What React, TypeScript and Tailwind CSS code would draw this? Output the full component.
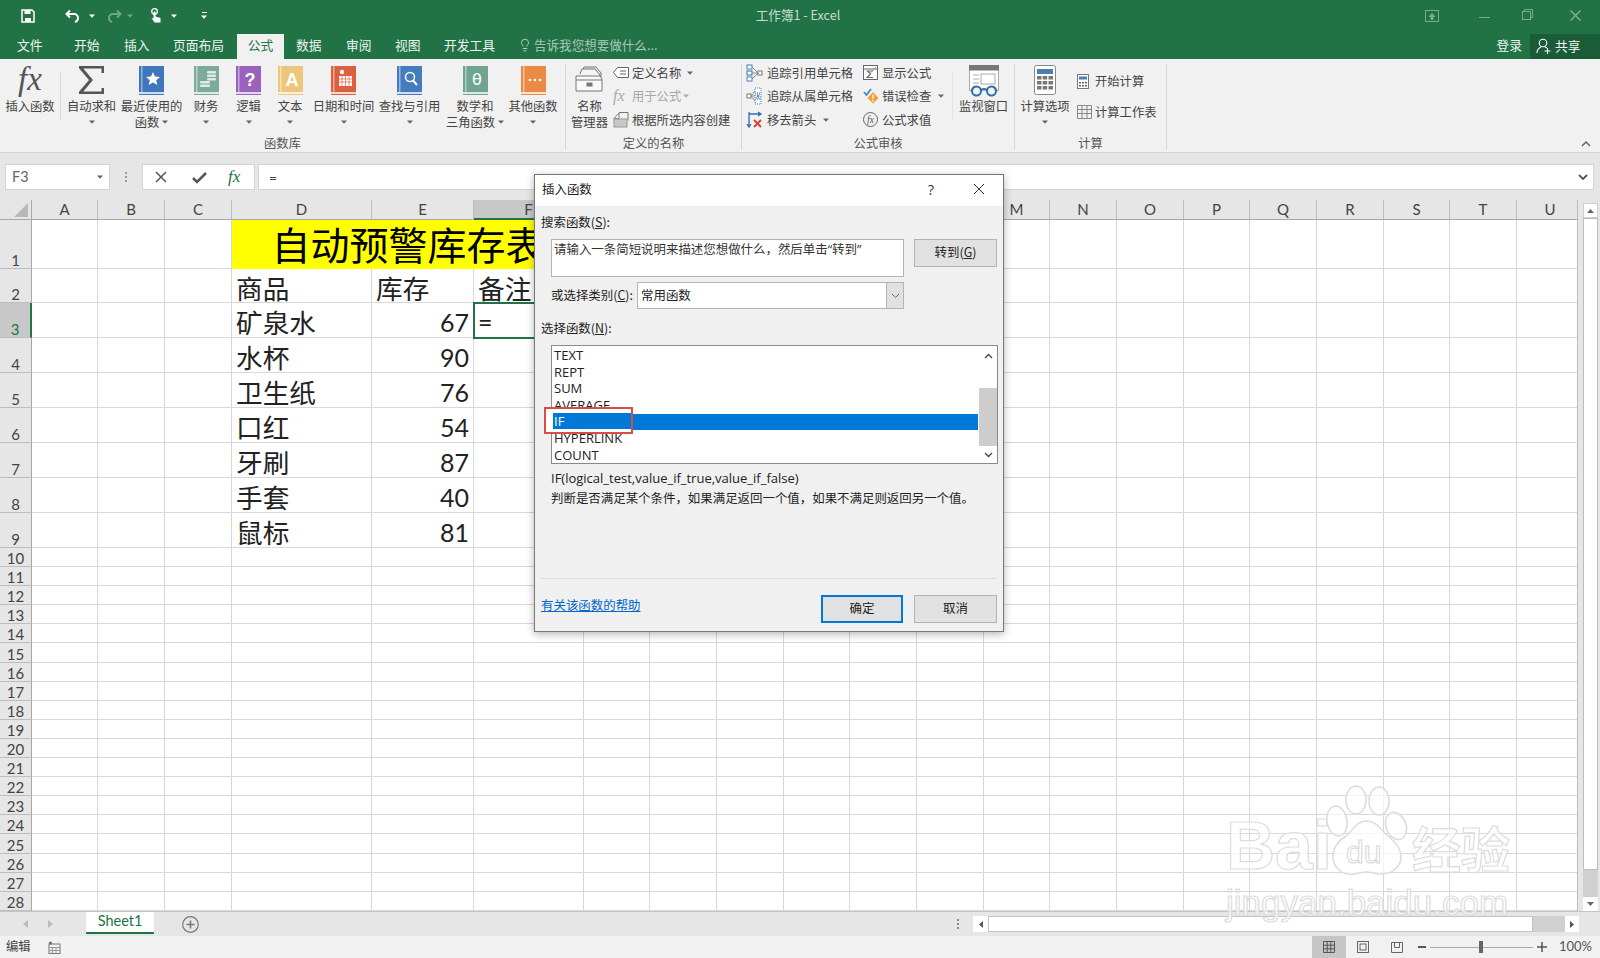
import React from "react";
import { Lightbulb } from "lucide-react";

const CJK = "font-['Noto_Sans_CJK_SC','Noto_Sans',sans-serif]";
const LAT = "font-['Lato','Noto_Sans_CJK_SC',sans-serif]";
const UI = "font-['Open_Sans','Noto_Sans_CJK_SC',sans-serif]";

const Caret = ({ c = "#666" }: { c?: string }) => (
  <svg width="6" height="4" viewBox="0 0 6 4" className="shrink-0"><path d="M0 0.5h6L3 3.7z" fill={c} /></svg>
);

const Book = ({ color, spine, children }: { color: string; spine?: string; children?: React.ReactNode }) => (
  <svg width="25" height="30" viewBox="0 0 25 30">
    <rect x="0" y="0" width="25" height="26.5" fill={color} />
    <rect x="2.4" y="0" width="0.9" height="26.5" fill="#fff" opacity="0.75" />
    <rect x="0" y="26.5" width="25" height="1.3" fill="#fff" />
    <rect x="0" y="27.8" width="25" height="1.2" fill={spine ?? color} />
    {children}
  </svg>
);

const BigBtn = ({ w, lines, icon, caret = true, sub }: { w: string; lines: string[]; icon: React.ReactNode; caret?: boolean; sub?: boolean }) => (
  <div className={`${w} flex flex-col items-center shrink-0`}>
    <div className="h-[40px] w-full flex items-start justify-center pt-[7px]">{icon}</div>
    {lines.map((l, i) => (
      <div key={i} className="h-[15.5px] leading-[15.5px] whitespace-nowrap flex items-center gap-[3px]">
        {l}
        {sub && i === lines.length - 1 && <Caret />}
      </div>
    ))}
    {caret && !sub && <div className="h-[15.5px] flex items-center justify-center"><Caret /></div>}
  </div>
);

const Sep = ({ cls = "" }: { cls?: string }) => <div className={`w-px shrink-0 bg-[#d6d6d6] ${cls}`} />;

const GroupLabel = ({ t }: { t: string }) => (
  <div className="h-[15px] leading-[15px] text-center text-[#555] whitespace-nowrap">{t}</div>
);

const SmallRow = ({ icon, text, h, gray, caret, iw }: { icon: React.ReactNode; text: string; h: string; gray?: boolean; caret?: string; iw: string }) => (
  <div className={`${h} flex items-center whitespace-nowrap ${gray ? "text-[#a8a8a8]" : ""}`}>
    <div className={`${iw} shrink-0 flex items-center`}>{icon}</div>
    <span>{text}</span>
    {caret && <span className={`${caret} flex`}><Caret c={gray ? "#aaa" : "#666"} /></span>}
  </div>
);

const TraceIcon = ({ flip }: { flip?: boolean }) => (
  <svg width="17" height="18" viewBox="0 0 17 18" fill="none" stroke="#4a7fb8" strokeWidth="1">
    {flip ? (
      <>
        <rect x="1" y="7" width="4" height="4" fill="#fff" stroke="#777" />
        <path d="M5 9l4-5M5 9h4M5 9l4 5" stroke="#888" />
        <rect x="9" y="1" width="6" height="5" fill="#fff" strokeDasharray="1 1" stroke="#4a7fb8" />
        <rect x="9" y="7" width="6" height="4" fill="#fff" strokeDasharray="1 1" />
        <rect x="9" y="12" width="6" height="5" fill="#fff" strokeDasharray="1 1" />
        <path d="M12 7.5v3M10.5 9h3" stroke="#2f6fb0" />
      </>
    ) : (
      <>
        <rect x="1" y="1" width="5" height="4" fill="#fff" stroke="#4a7fb8" />
        <rect x="1" y="7" width="5" height="4" fill="#fff" stroke="#2f6fb0" />
        <rect x="1" y="13" width="5" height="4" fill="#fff" stroke="#4a7fb8" />
        <path d="M6 3l6 6M6 9h6M6 15l6-6" stroke="#888" />
        <rect x="12" y="7" width="4" height="4" fill="#fff" stroke="#777" />
      </>
    )}
  </svg>
);

const cols = ["A", "B", "C", "D", "E", "F", "G", "H", "I", "J", "K", "L", "M", "N", "O", "P", "Q", "R", "S", "T", "U"];
const names: Record<number, [string, string]> = {
  3: ["矿泉水", "67"], 4: ["水杯", "90"], 5: ["卫生纸", "76"], 6: ["口红", "54"], 7: ["牙刷", "87"], 8: ["手套", "40"], 9: ["鼠标", "81"],
};
const rows = Array.from({ length: 28 }, (_, i) => i + 1);
const cellB = "bg-white border-r border-b border-[#d8d8d8]";

function Sheet() {
  return (
    <div className="w-[1578px] h-full overflow-hidden border-r border-[#bdbdbd] grid grid-cols-[32px_66px_67px_67px_140px_102px_110px_66px_67px_67px_66px_67px_67px_66px_67px_67px_66px_67px_67px_66px_67px_67px] grid-rows-[20px_49px_34px_35px_35px_35px_35px_35px_35px_35px_repeat(19,19.105px)]">
      <div className="bg-[#e6e6e6] border-b border-r border-[#a8a8a8] flex items-end justify-end p-[2px] pr-[3px]">
        <svg width="14" height="14" viewBox="0 0 14 14"><path d="M14 0v14H0z" fill="#b8b8b8" /></svg>
      </div>
      {cols.map((c) => (
        <div key={c} className={`${LAT} text-[15px] text-[#444] flex items-center justify-center border-r border-[#bdbdbd] ${c === "F" ? "bg-[#c8c8c8] border-b-2 border-b-[#217346]" : "bg-[#e6e6e6] border-b border-b-[#a8a8a8]"}`}>{c}</div>
      ))}
      {rows.map((r) => (
        <React.Fragment key={r}>
          <div className={`${LAT} text-[15px] leading-[16px] flex items-end justify-center border-b border-[#bdbdbd] ${r === 3 ? "bg-[#c8c8c8] border-r-2 border-r-[#217346] text-[#217346]" : "bg-[#e6e6e6] border-r border-r-[#a8a8a8] text-[#444]"}`}>{r}</div>
          {cols.map((c) => {
            if (r === 1 && (c === "E" || c === "F")) return null;
            if (r === 1 && c === "D")
              return <div key={c} className={`col-span-3 bg-[#ffff00] flex items-center justify-center pb-[4px] text-[39px] leading-[44px] text-black ${CJK}`}>自动预警库存表</div>;
            let content: React.ReactNode = null;
            let extra = "";
            if (r === 2 && c === "D") content = "商品";
            if (r === 2 && c === "E") content = "库存";
            if (r === 2 && c === "F") content = "备注";
            if (names[r] && c === "D") content = names[r][0];
            if (names[r] && c === "E") {
              content = <span className={`${LAT} text-[25px] w-full text-right pr-[4px] leading-[30px]`}>{names[r][1]}</span>;
            }
            if (r === 3 && c === "F") {
              content = <span className={`${LAT} text-[25px] leading-[30px]`}>=</span>;
              extra = "outline-2 outline-[#217346] -outline-offset-1 z-10";
            }
            return (
              <div key={c} className={`${cellB} ${extra} ${content ? `flex items-center pl-[4px] pt-[4px] text-[26.67px] leading-[30px] text-[#222] overflow-visible whitespace-nowrap ${CJK}` : ""}`}>{content}</div>
            );
          })}
        </React.Fragment>
      ))}
    </div>
  );
}

const ListItem = ({ t }: { t: string }) => (
  <div className="h-[16.67px] leading-[16.67px] pl-[2px] text-[#222]">{t}</div>
);

function Dialog() {
  return (
    <div className={`absolute left-[534px] top-[174px] w-[470px] h-[458px] bg-[#f0f0f0] border border-[#777] shadow-[0_2px_8px_rgba(0,0,0,0.3)] flex flex-col z-20 text-[12.45px] text-[#222] ${CJK}`}>
      <div className="h-[31px] bg-white flex items-center pl-[7px] pb-[3px] shrink-0">
        <span className="flex-1">插入函数</span>
        <span className={`${UI} w-[14px] mr-[35px] text-center text-[14px] text-[#333]`}>?</span>
        <svg width="12" height="12" viewBox="0 0 12 12" className="mr-[18px]"><path d="M1 1l10 10M11 1L1 11" stroke="#333" strokeWidth="1" /></svg>
      </div>
      <div className="ml-[6px] mt-[8px] h-[16px] leading-[16px]">搜索函数(<u>S</u>):</div>
      <div className="ml-[16px] mt-[9px] flex items-start">
        <div className="w-[353px] h-[38px] bg-white border border-[#b4b4b4] pl-[2px] pt-0 leading-[18px] text-[#333] whitespace-nowrap">请输入一条简短说明来描述您想做什么，然后单击<span className={UI}>“</span>转到<span className={UI}>”</span></div>
        <div className="ml-[10px] w-[83px] h-[28px] bg-[#e1e1e1] border border-[#b4b4b4] flex items-center justify-center pb-[1px]">转到(<u>G</u>)</div>
      </div>
      <div className="ml-[16px] mt-[5px] flex items-center">
        <span className="w-[86px] whitespace-nowrap pb-[1px]">或选择类别(<u>C</u>):</span>
        <div className="w-[267px] h-[27px] bg-white border border-[#b4b4b4] flex items-center pl-[3px]">
          <span className="flex-1 pb-[1px]">常用函数</span>
          <div className="w-[17px] h-full bg-[#e1e1e1] border-l border-[#b4b4b4] flex items-center justify-center">
            <svg width="9" height="6" viewBox="0 0 9 6" fill="none"><path d="M1 1l3.5 3.5L8 1" stroke="#666" /></svg>
          </div>
        </div>
      </div>
      <div className="ml-[6px] mt-[11px] h-[16px] leading-[16px]">选择函数(<u>N</u>):</div>
      <div className="relative ml-[16px] mt-[9px] w-[447px] h-[119px] bg-white border border-[#8a8a8a] flex">
        <div className={`w-[427px] pt-[1px] text-[13px] ${UI} overflow-hidden`}>
          <ListItem t="TEXT" />
          <ListItem t="REPT" />
          <ListItem t="SUM" />
          <ListItem t="AVERAGE" />
          <div className="h-[16.67px] bg-[#0078d7]" />
          <ListItem t="HYPERLINK" />
          <ListItem t="COUNT" />
        </div>
        <div className="w-[18px] ml-[1px] flex flex-col items-center">
          <div className="h-[17px] flex items-center justify-center mt-[1px]">
            <svg width="9" height="6" viewBox="0 0 9 6" fill="none"><path d="M1 5l3.5-3.5L8 5" stroke="#444" strokeWidth="1.3" /></svg>
          </div>
          <div className="mt-[24px] w-full h-[58px] bg-[#cdcdcd]" />
          <div className="h-[17px] flex items-center justify-center">
            <svg width="9" height="6" viewBox="0 0 9 6" fill="none"><path d="M1 1l3.5 3.5L8 1" stroke="#444" strokeWidth="1.3" /></svg>
          </div>
        </div>
        <div className={`absolute left-[-8px] top-[61px] w-[89px] h-[27px] bg-white border-2 border-[#dc4a4a] pt-[4px] pl-[7px] text-[13px] ${UI}`}>
          <div className="h-[16px] leading-[16px] bg-[#0078d7] text-white pl-[1px]">IF</div>
        </div>
      </div>
      <div className={`ml-[16px] mt-[5px] h-[18px] leading-[18px] text-[13px] ${UI}`}>IF(logical_test,value_if_true,value_if_false)</div>
      <div className="ml-[16px] mt-[3px] h-[16px] leading-[16px] whitespace-nowrap">判断是否满足某个条件，如果满足返回一个值，如果不满足则返回另一个值。</div>
      <div className="mx-[6px] mt-[72px] h-px bg-[#dcdcdc]" />
      <div className="ml-[6px] mt-[16px] flex items-start">
        <a className="mt-[2px] h-[16px] leading-[16px] w-[280px] text-[#0066cc] underline">有关该函数的帮助</a>
        <div className="w-[82px] h-[28px] bg-[#e1e1e1] border-2 border-[#0078d7] flex items-center justify-center pb-[1px]">确定</div>
        <div className="ml-[11px] w-[83px] h-[28px] bg-[#e1e1e1] border border-[#b4b4b4] flex items-center justify-center pb-[1px]">取消</div>
      </div>
    </div>
  );
}

const tabs: [string, string][] = [
  ["文件", "ml-[17px] w-[57px]"],
  ["开始", "w-[50px]"],
  ["插入", "w-[49px]"],
  ["页面布局", "w-[64px]"],
];
const tabsAfter: [string, string][] = [
  ["数据", "ml-[12px] w-[50px]"],
  ["审阅", "w-[49px]"],
  ["视图", "w-[49px]"],
  ["开发工具", "w-[74px]"],
];

function Watermark() {
  const outline = "text-white/70 [-webkit-text-stroke:1.2px_#dcdcdc]";
  return (
    <div className="absolute left-[1226px] top-[785px] w-[292px] h-[140px] z-10 pointer-events-none">
      <span className={`absolute left-0 top-[20px] text-[68px] leading-[80px] font-bold font-['Liberation_Sans',sans-serif] ${outline}`}>Bai</span>
      <svg width="86" height="94" viewBox="0 0 86 94" className="absolute left-[98px] top-0" fill="#ffffffb0" stroke="#dcdcdc" strokeWidth="1.5">
        <ellipse cx="13" cy="36" rx="10" ry="15" transform="rotate(-10 13 36)" />
        <ellipse cx="32" cy="15" rx="10" ry="14" />
        <ellipse cx="55" cy="16" rx="10" ry="14" />
        <ellipse cx="72" cy="41" rx="10" ry="14" transform="rotate(-20 72 41)" />
        <path d="M42 36c-10 0-13 10-20 15C14 56 9 63 9 72c0 12 11 19 22 17 5-1 8-2 12-2s8 2 14 2c11 0 20-7 20-17 0-9-6-15-13-21-7-5-10-15-22-15z" />
      </svg>
      <span className="absolute left-[120px] top-[47px] text-[32px] leading-[40px] font-['Liberation_Sans',sans-serif] text-white/70 [-webkit-text-stroke:1px_#d8d8d8]">du</span>
      <span className={`absolute left-[186px] top-[32px] text-[49px] leading-[60px] font-bold whitespace-nowrap ${CJK} ${outline}`}>经验</span>
      <span className={`absolute left-0 top-[97px] text-[35px] leading-[42px] whitespace-nowrap font-['Liberation_Sans',sans-serif] ${outline}`}>jingyan.baidu.com</span>
    </div>
  );
}

export default function App() {
  return (
    <div className={`relative w-[1600px] h-[958px] overflow-hidden flex flex-col bg-white text-[12.3px] text-[#444] ${CJK}`}>
      {/* Title bar */}
      <div className="h-[34px] bg-[#217346] grid grid-cols-[1fr_auto_1fr] items-center pb-[3px] shrink-0">
        <div className="flex items-center pl-[21px]">
          <svg width="14" height="14" viewBox="0 0 14 14" fill="none">
            <path d="M1 1h10l2 2v10H1z" stroke="#fff" strokeWidth="1.5" />
            <rect x="3.5" y="1" width="6" height="4" fill="#fff" />
            <rect x="4" y="9" width="6" height="4" fill="#fff" />
          </svg>
          <svg width="16" height="14" viewBox="0 0 16 14" fill="none" className="ml-[30px]">
            <path d="M5 1.5L1.5 5 5 8.5" stroke="#fff" strokeWidth="2" />
            <path d="M2 5h7a4 4 0 0 1 4 4c0 2-1.500 3.500-3 4" stroke="#fff" strokeWidth="2" />
          </svg>
          <span className="ml-[8px] flex"><Caret c="#fff" /></span>
          <svg width="16" height="14" viewBox="0 0 16 14" fill="none" className="ml-[11px] opacity-35 -scale-x-100">
            <path d="M5 1.5L1.500 5 5 8.500" stroke="#fff" strokeWidth="2" />
            <path d="M2 5h7a4 4 0 0 1 4 4c0 2-1.500 3.500-3 4" stroke="#fff" strokeWidth="2" />
          </svg>
          <span className="ml-[5px] flex opacity-35"><Caret c="#fff" /></span>
          <svg width="12" height="16" viewBox="0 0 12 16" className="ml-[17px]" fill="#fff">
            <circle cx="4.500" cy="3.500" r="2.800" fill="none" stroke="#fff" strokeWidth="1.300" />
            <path d="M3.500 3.500h2v5l5 1.500v4.500H4.500L1.500 10l2 .5z" />
          </svg>
          <span className="ml-[9px] flex"><Caret c="#fff" /></span>
          <div className="ml-[24px] flex flex-col items-center gap-[2px]">
            <div className="w-[5px] h-px bg-white" />
            <Caret c="#fff" />
          </div>
        </div>
        <div className="text-[#c8dcd0] text-[12.6px] -translate-x-[2px] whitespace-nowrap">工作簿1 - Excel</div>
        <div className="flex items-center justify-end">
          <svg width="14" height="12" viewBox="0 0 14 12" className="opacity-40" fill="none"><rect x="0.500" y="0.500" width="13" height="11" stroke="#fff" /><path d="M7 3L3.500 7h2v3h3V7h2z" fill="#fff" /></svg>
          <div className="w-[11px] h-px bg-white opacity-40 ml-[40px] mt-[3px]" />
          <svg width="11" height="11" viewBox="0 0 11 11" className="opacity-40 ml-[32px] mb-[2px]" fill="none" stroke="#fff"><rect x="0.500" y="2.500" width="8" height="8" /><path d="M2.500 2.500v-2h8v8h-2" /></svg>
          <svg width="11" height="11" viewBox="0 0 11 11" className="opacity-45 ml-[37px] mr-[19px]" fill="none" stroke="#fff" strokeWidth="1.300"><path d="M.5.5l10 10M10.500.5l-10 10" /></svg>
        </div>
      </div>
      {/* Tabs */}
      <div className="h-[25px] bg-[#217346] flex items-stretch text-[12.75px] text-[#eef5f0] shrink-0">
        {tabs.map(([t, c]) => (
          <div key={t} className={`${c} flex items-center pb-[3px] whitespace-nowrap`}>{t}</div>
        ))}
        <div className="w-[47px] bg-[#f1f1f1] text-[#217346] flex items-center justify-center pb-[3px]">公式</div>
        {tabsAfter.map(([t, c]) => (
          <div key={t} className={`${c} flex items-center pb-[3px] whitespace-nowrap`}>{t}</div>
        ))}
        <div className="flex items-center pb-[3px] text-[#a9c8b6] text-[12.55px] whitespace-nowrap flex-1">
          <Lightbulb size={14} strokeWidth={1.4} className="text-[#cfe0d6] mr-[2px]" />
          告诉我您想要做什么...
        </div>
        <div className="flex items-center pb-[3px] mr-[8px] whitespace-nowrap">登录</div>
        <div className="w-[70px] bg-[#1a5c38] flex items-center pb-[2px] pl-[6px] gap-[3px] whitespace-nowrap">
          <svg width="16" height="16" viewBox="0 0 16 16" fill="none" stroke="#fff" strokeWidth="1.100">
            <circle cx="7" cy="5" r="3.800" />
            <path d="M1 15c0-3.500 2-5 4-6M9 9c.6.300 1.200.700 1.700 1.200M8.500 13h6M11.500 10v6" />
          </svg>
          共享
        </div>
      </div>
      {/* Ribbon */}
      <div className="h-[94px] bg-[#f1f1f1] border-b border-[#d2d2d2] flex shrink-0 relative">
        <div className="w-[565px] flex flex-col shrink-0">
          <div className="h-[77px] flex">
            <BigBtn w="w-[60px]" lines={["插入函数"]} caret={false} icon={<span className="text-[33px] leading-[26px] italic text-[#555] font-['Liberation_Serif',serif]">fx</span>} />
            <Sep cls="h-[48px] mt-[13px]" />
            <BigBtn w="w-[61px]" lines={["自动求和"]} icon={
              <svg width="25" height="28" viewBox="0 0 25 28"><path d="M24 7V1H1l11 13L1 27h23v-5" fill="none" stroke="#555" strokeWidth="3" /></svg>
            } />
            <BigBtn w="w-[59px]" lines={["最近使用的", "函数"]} sub icon={
              <Book color="#3f76bc" spine="#3f76bc"><path d="M14 6l2 4.600 5 .4-3.800 3.200 1.200 4.800-4.400-2.600-4.400 2.600 1.200-4.800L7 11l5-.4z" fill="#fff" /></Book>
            } />
            <BigBtn w="w-[50px]" lines={["财务"]} icon={
              <Book color="#7dab99"><g fill="#dfe9e4"><rect x="6" y="15" width="10" height="2.500" rx="1" /><rect x="6" y="18.500" width="10" height="2.500" rx="1" /><rect x="13" y="5" width="9" height="2.500" rx="1" /><rect x="13" y="8.500" width="9" height="2.500" rx="1" /><rect x="13" y="12" width="9" height="2.500" rx="1" /></g></Book>
            } />
            <BigBtn w="w-[35px]" lines={["逻辑"]} icon={
              <Book color="#9b62bd"><text x="14" y="20" textAnchor="middle" fontSize="18" fontWeight="700" fill="#fff" fontFamily="Liberation Sans">?</text></Book>
            } />
            <BigBtn w="w-[48px]" lines={["文本"]} icon={
              <Book color="#eec57c"><text x="14" y="20" textAnchor="middle" fontSize="18" fontWeight="700" fill="#fff" fontFamily="Liberation Sans">A</text></Book>
            } />
            <BigBtn w="w-[59px]" lines={["日期和时间"]} icon={
              <Book color="#dc5f3f">
                <circle cx="11" cy="6" r="2.200" fill="#fff" />
                <rect x="8" y="10" width="13" height="10" fill="#fff" />
                <path d="M8 13h13M8 16h13M11 10v10M14.500 10v10M18 10v10" stroke="#dc5f3f" strokeWidth=".7" />
              </Book>
            } />
            <BigBtn w="w-[73px]" lines={["查找与引用"]} icon={
              <Book color="#457cbd"><circle cx="13" cy="11" r="4.500" fill="none" stroke="#fff" strokeWidth="1.500" /><path d="M16 14.500l4 4.500" stroke="#fff" strokeWidth="2" /></Book>
            } />
            <BigBtn w="w-[58px]" lines={["数学和", "三角函数"]} sub icon={
              <Book color="#6fa591"><text x="14" y="19" textAnchor="middle" fontSize="16" fill="#fff" fontFamily="DejaVu Sans">θ</text></Book>
            } />
            <BigBtn w="w-[58px]" lines={["其他函数"]} icon={
              <Book color="#e98b44"><circle cx="9" cy="14" r="1.300" fill="#fff" /><circle cx="14" cy="14" r="1.300" fill="#fff" /><circle cx="19" cy="14" r="1.300" fill="#fff" /></Book>
            } />
          </div>
          <GroupLabel t="函数库" />
        </div>
        <Sep cls="h-[86px] mt-[5px]" />
        <div className="w-[175px] flex flex-col shrink-0">
          <div className="h-[77px] flex">
            <BigBtn w="w-[47px]" lines={["名称", "管理器"]} caret={false} icon={
              <svg width="29" height="26" viewBox="0 0 29 26" fill="none" stroke="#777">
                <path d="M7 6l2-5h12l5 6v4" fill="#e8e8e8" />
                <path d="M5 8l2-5h13l5 6v3" fill="#f4f4f4" />
                <path d="M1 10h24l2 3v12H1z" fill="#f8f8f8" />
                <path d="M1 14h26" />
                <rect x="12" y="17" width="5" height="3" fill="#777" />
              </svg>
            } />
            <div className="pt-[2px]">
              <SmallRow h="h-[23.500px]" iw="w-[19px]" caret="ml-[6px]" text="定义名称" icon={
                <svg width="16" height="11" viewBox="0 0 16 11" fill="none" stroke="#666"><path d="M4.500.5h11v10h-11L.5 5.500z" fill="#fff" /><path d="M7 4h6M7 7h6" /></svg>
              } />
              <SmallRow h="h-[23.500px]" iw="w-[19px]" gray caret="ml-[2px]" text="用于公式" icon={
                <span className="text-[16px] italic text-[#aaa] font-['Liberation_Serif',serif]">fx</span>
              } />
              <SmallRow h="h-[23.500px]" iw="w-[19px]" text="根据所选内容创建" icon={
                <svg width="16" height="16" viewBox="0 0 16 16" fill="none" stroke="#777"><path d="M6 .5h9v8" /><path d="M1 6.500L6 1v5.500z" fill="#fff" /><rect x="1" y="7" width="13" height="8" fill="#c8c8c8" stroke="#999" /></svg>
              } />
            </div>
          </div>
          <GroupLabel t="定义的名称" />
        </div>
        <Sep cls="h-[86px] mt-[5px]" />
        <div className="w-[272px] flex flex-col shrink-0">
          <div className="h-[77px] flex">
            <div className="pt-[2px] pl-[4px] w-[121px]">
              <SmallRow h="h-[23.500px]" iw="w-[21px]" text="追踪引用单元格" icon={<TraceIcon />} />
              <SmallRow h="h-[23.500px]" iw="w-[21px]" text="追踪从属单元格" icon={<TraceIcon flip />} />
              <SmallRow h="h-[23.500px]" iw="w-[21px]" caret="ml-[7px]" text="移去箭头" icon={
                <svg width="17" height="18" viewBox="0 0 17 18" fill="none"><path d="M3 1v14M1 13l2 3 2-3M3 3h11M12 1l3 2-3 2" stroke="#2f6fb0" strokeWidth="1.300" /><path d="M8 9l7 7M15 9l-7 7" stroke="#d9472f" strokeWidth="2" /></svg>
              } />
            </div>
            <div className="pt-[2px] w-[89px]">
              <SmallRow h="h-[23.500px]" iw="w-[19px]" text="显示公式" icon={
                <svg width="15" height="15" viewBox="0 0 15 15" fill="none" stroke="#666"><rect x=".5" y=".5" width="14" height="14" fill="#fff" /><path d="M.5 4h14" /><path d="M10 6H4.500l3 3-3 3.500H10" strokeWidth="1.100" /><path d="M3 13L13 2" stroke="#999" /></svg>
              } />
              <SmallRow h="h-[23.500px]" iw="w-[19px]" caret="ml-[7px]" text="错误检查" icon={
                <svg width="16" height="16" viewBox="0 0 16 16"><path d="M1 4l2.500 3L8 1" fill="none" stroke="#3f8ed0" strokeWidth="1.800" /><path d="M10 4l5.500 6-5.500 5.500L4.500 10z" fill="#f0a030" /><path d="M10 6.500v4.500M10 12v1.500" stroke="#fff" strokeWidth="1.300" /></svg>
              } />
              <SmallRow h="h-[23.500px]" iw="w-[19px]" text="公式求值" icon={
                <svg width="15" height="15" viewBox="0 0 15 15" fill="none"><circle cx="7.500" cy="7.500" r="7" stroke="#666" /><text x="7.500" y="11" textAnchor="middle" fontSize="9.500" fontStyle="italic" fill="#555" fontFamily="Liberation Serif">fx</text></svg>
              } />
            </div>
            <Sep cls="h-[48px] mt-[13px] bg-[#e2e2e2]" />
            <BigBtn w="w-[61px]" lines={["监视窗口"]} caret={false} icon={
              <svg width="30" height="32" viewBox="0 0 30 32" fill="none" className="-mt-[1px]">
                <rect x=".5" y=".5" width="29" height="25" fill="#fff" stroke="#aaa" />
                <rect x="0" y="0" width="30" height="5.500" fill="#777" />
                <path d="M4 10h6M4 14h6M4 18h6" stroke="#aaa" />
                <rect x="12" y="9" width="14" height="10" stroke="#aaa" />
                <circle cx="7.500" cy="26" r="4.500" fill="#f1f1f1" stroke="#2f6fa8" strokeWidth="2" />
                <circle cx="22.500" cy="26" r="4.500" fill="#f1f1f1" stroke="#2f6fa8" strokeWidth="2" />
                <path d="M12 25c2-1.500 4-1.500 6 0M3 25l3-4M27 25l-3-4" stroke="#2f6fa8" strokeWidth="1.500" />
              </svg>
            } />
          </div>
          <GroupLabel t="公式审核" />
        </div>
        <Sep cls="h-[86px] mt-[5px]" />
        <div className="w-[151px] flex flex-col shrink-0">
          <div className="h-[77px] flex">
            <BigBtn w="w-[60px]" lines={["计算选项"]} icon={
              <svg width="22" height="30" viewBox="0 0 22 30" className="-mt-[1px]">
                <rect x=".5" y=".5" width="21" height="29" rx="2" fill="#fff" stroke="#888" />
                <rect x="3" y="4" width="16" height="5" fill="#4a7fb0" />
                <g fill="#777">
                  <rect x="3" y="11" width="4.500" height="3.500" /><rect x="8.700" y="11" width="4.500" height="3.500" /><rect x="14.500" y="11" width="4.500" height="3.500" />
                  <rect x="3" y="16" width="4.500" height="3.500" /><rect x="8.700" y="16" width="4.500" height="3.500" /><rect x="14.500" y="16" width="4.500" height="3.500" />
                  <rect x="3" y="21" width="4.500" height="3.500" /><rect x="8.700" y="21" width="4.500" height="3.500" /><rect x="14.500" y="21" width="4.500" height="3.500" />
                </g>
              </svg>
            } />
            <div className="pt-[7px] pl-[2px]">
              <SmallRow h="h-[30.700px]" iw="w-[18px]" text="开始计算" icon={
                <svg width="12" height="15" viewBox="0 0 12 15"><rect x=".5" y=".5" width="11" height="14" fill="#fff" stroke="#777" /><rect x="2" y="2.500" width="8" height="3" fill="#4a7fb0" /><path d="M2 8h2v1.500H2zM5 8h2v1.500H5zM8 8h2v1.500H8zM2 11h2v1.500H2zM5 11h2v1.500H5zM8 11h2v1.500H8z" fill="#666" /></svg>
              } />
              <SmallRow h="h-[30.700px]" iw="w-[18px]" text="计算工作表" icon={
                <svg width="15" height="14" viewBox="0 0 15 14" fill="none" stroke="#888"><path d="M.5.5h14v13H.5zM.5 4.500h14M.5 8.500h14M5 .5v13M10 .5v13" /></svg>
              } />
            </div>
          </div>
          <GroupLabel t="计算" />
        </div>
        <Sep cls="h-[86px] mt-[5px]" />
        <div className="flex-1 flex items-end justify-end pr-[9px] pb-[5px]">
          <svg width="10" height="7" viewBox="0 0 10 7" fill="none"><path d="M1 6l4-4 4 4" stroke="#666" strokeWidth="1.500" /></svg>
        </div>
      </div>
      {/* Formula bar */}
      <div className="h-[47px] bg-[#e6e6e6] flex items-start pt-[11px] pl-[5px] shrink-0">
        <div className={`w-[105px] h-[26px] bg-white border border-[#d4d4d4] flex items-center pl-[6px] pr-[6px] ${LAT} text-[14.500px] text-[#666]`}>
          <span className="flex-1">F3</span>
          <Caret />
        </div>
        <div className="w-[32px] h-[26px] flex flex-col items-center justify-center gap-[2px]">
          <div className="w-[2px] h-[2px] bg-[#999]" /><div className="w-[2px] h-[2px] bg-[#999]" /><div className="w-[2px] h-[2px] bg-[#999]" />
        </div>
        <div className="w-[113px] h-[26px] bg-white border border-[#d4d4d4] flex items-center">
          <svg width="14" height="14" viewBox="0 0 14 14" className="ml-[11px]" fill="none"><path d="M2 2l10 10M12 2L2 12" stroke="#555" strokeWidth="1.500" /></svg>
          <svg width="15" height="13" viewBox="0 0 15 13" className="ml-[24px]" fill="none"><path d="M1 7l4 4 9-9" stroke="#555" strokeWidth="2.500" /></svg>
          <span className="ml-[21px] text-[17px] italic text-[#217346] font-['Liberation_Serif',serif]">fx</span>
        </div>
        <div className="ml-[3px] w-[1336px] h-[26px] bg-white border border-[#d4d4d4] flex items-center pl-[10px] pr-[5px]">
          <span className={`${LAT} flex-1 text-[14px] text-[#444]`}>=</span>
          <svg width="10" height="7" viewBox="0 0 10 7" fill="none"><path d="M1 1l4 4 4-4" stroke="#555" strokeWidth="1.800" /></svg>
        </div>
      </div>
      {/* Sheet area */}
      <div className="h-[711px] flex shrink-0 bg-[#e6e6e6]">
        <Sheet />
        <div className="flex-1 flex flex-col items-center pt-[3px] pl-[2px]">
          <div className="w-[15px] h-[15px] bg-white border border-[#cfcfcf] flex items-center justify-center">
            <svg width="7" height="4" viewBox="0 0 7 4"><path d="M0 4h7L3.500 0z" fill="#666" /></svg>
          </div>
          <div className="w-[15px] h-[652px] bg-white border border-[#bdbdbd]" />
          <div className="w-[15px] h-[27px] bg-[#d0d0d0]" />
          <div className="w-[15px] h-[14px] bg-white flex items-center justify-center">
            <svg width="7" height="4" viewBox="0 0 7 4"><path d="M0 0h7L3.500 4z" fill="#666" /></svg>
          </div>
        </div>
      </div>
      {/* Sheet tabs */}
      <div className="h-[25px] bg-[#e6e6e6] border-t border-[#c4c4c4] flex items-start shrink-0">
        <div className="w-[86px] h-full flex items-center pl-[23px] gap-[20px]">
          <svg width="5" height="8" viewBox="0 0 5 8"><path d="M5 0v8L0 4z" fill="#bbb" /></svg>
          <svg width="5" height="8" viewBox="0 0 5 8"><path d="M0 0v8l5-4z" fill="#bbb" /></svg>
        </div>
        <div className={`w-[68px] h-[22px] bg-white border-b-2 border-[#217346] text-[#217346] flex items-center justify-center pb-[3px] text-[14.500px] ${LAT}`}>Sheet1</div>
        <div className="w-[72px] h-full flex items-center justify-center">
          <svg width="17" height="17" viewBox="0 0 17 17" fill="none" stroke="#777"><circle cx="8.500" cy="8.500" r="7.800" strokeWidth="1.200" /><path d="M8.500 4.500v8M4.500 8.500h8" strokeWidth="1.500" /></svg>
        </div>
        <div className="flex-1 h-full flex items-center justify-end">
          <div className="flex flex-col gap-[2px] mr-[14px]">
            <div className="w-[2px] h-[2px] bg-[#888]" /><div className="w-[2px] h-[2px] bg-[#888]" /><div className="w-[2px] h-[2px] bg-[#888]" />
          </div>
        </div>
        <div className="w-[15px] h-[16px] mt-[4px] bg-white flex items-center justify-center">
          <svg width="4" height="7" viewBox="0 0 4 7"><path d="M4 0v7L0 3.500z" fill="#555" /></svg>
        </div>
        <div className="w-[545px] h-[16px] mt-[4px] bg-white border border-[#c4c4c4]" />
        <div className="w-[32px] h-[16px] mt-[4px] bg-[#d0d0d0]" />
        <div className="w-[14px] h-[16px] mt-[4px] bg-white flex items-center justify-center">
          <svg width="4" height="7" viewBox="0 0 4 7"><path d="M0 0v7l4-3.500z" fill="#555" /></svg>
        </div>
        <div className="w-[21px]" />
      </div>
      {/* Status bar */}
      <div className="h-[22px] bg-[#f1f1f1] flex items-center text-[12.300px] text-[#444] shrink-0">
        <span className="ml-[6px] w-[42px] pb-[2px]">编辑</span>
        <svg width="13" height="13" viewBox="0 0 13 13" fill="none"><rect x="1" y="3" width="11" height="9.500" stroke="#777" /><path d="M1 6.500h11M4.500 6.500v6M8 6.500v6M1 9.500h11" stroke="#999" /><circle cx="2.500" cy="2" r="1.500" fill="#666" /></svg>
        <div className="flex-1" />
        <div className="w-[34px] h-full bg-[#c6c6c6] flex items-center justify-center">
          <svg width="12" height="12" viewBox="0 0 12 12" fill="none" stroke="#555"><path d="M.5.5h11v11H.5zM.5 4.200h11M.5 7.800h11M4.200.5v11M7.800.5v11" /></svg>
        </div>
        <div className="w-[34px] flex justify-center">
          <svg width="12" height="12" viewBox="0 0 12 12" fill="none" stroke="#666"><rect x=".5" y=".5" width="11" height="11" /><rect x="3" y="3" width="6" height="6" /></svg>
        </div>
        <div className="w-[35px] flex justify-center">
          <svg width="12" height="11" viewBox="0 0 12 11" fill="none" stroke="#666"><path d="M.5.5h11v10H.5zM3.500.5v5h5v-5" /></svg>
        </div>
        <div className="w-[8px] h-[2px] bg-[#555] ml-[3px]" />
        <div className="relative w-[103px] h-px bg-[#aaa] ml-[4px]">
          <div className="absolute left-[49px] top-[-6px] w-[4px] h-[12px] bg-[#666]" />
        </div>
        <svg width="10" height="10" viewBox="0 0 10 10" className="ml-[4px]"><path d="M0 5h10M5 0v10" stroke="#555" strokeWidth="1.500" /></svg>
        <span className={`ml-[12px] mr-[8px] text-[13px] text-[#555] ${LAT}`}>100%</span>
      </div>
      <Dialog />
      <Watermark />
    </div>
  );
}
